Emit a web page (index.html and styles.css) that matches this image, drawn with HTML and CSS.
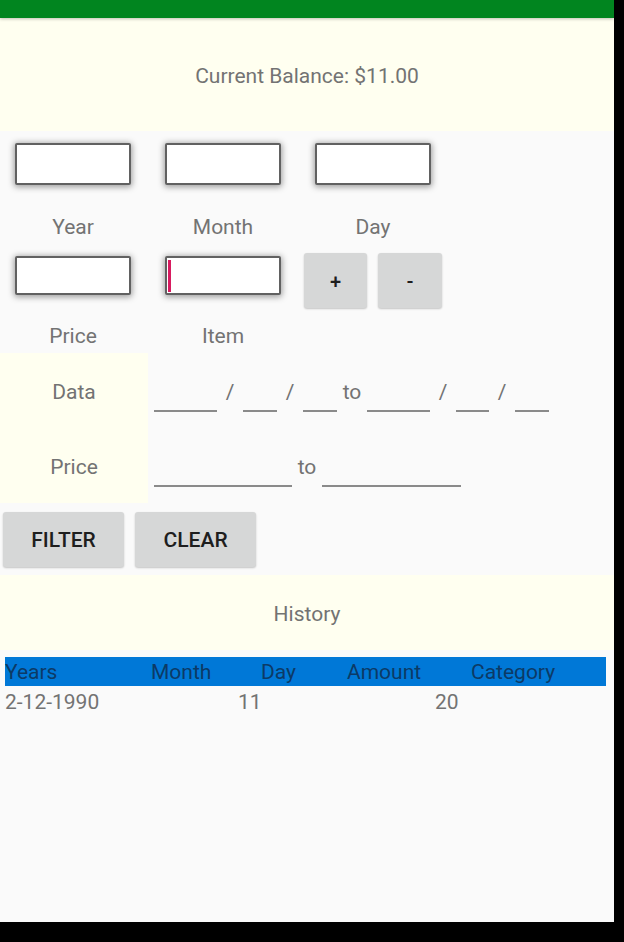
FILE: index.html
```html
<!DOCTYPE html>
<html>
<head>
<meta charset="utf-8">
<link rel="stylesheet" href="styles.css">
</head>
<body>
<div class="screen">
  <div class="appbar"></div>
  <div class="balance">Current Balance: $11.00</div>

  <div class="entry-row first">
    <div class="field"><div class="box tall"></div><div class="label">Year</div></div>
    <div class="field"><div class="box tall"></div><div class="label">Month</div></div>
    <div class="field"><div class="box tall"></div><div class="label">Day</div></div>
  </div>

  <div class="entry-row second">
    <div class="field"><div class="box"></div><div class="label">Price</div></div>
    <div class="field"><div class="box"><div class="cursor"></div></div><div class="label">Item</div></div>
    <div class="btn small plus">+</div>
    <div class="btn small minus">-</div>
  </div>

  <div class="filter">
    <div class="f-label">Data</div>
    <div class="f-inputs">
      <span class="line w63"></span><span class="sep">/</span>
      <span class="line w34"></span><span class="sep">/</span>
      <span class="line w34"></span><span class="sep to">to</span>
      <span class="line w63"></span><span class="sep">/</span>
      <span class="line w33"></span><span class="sep">/</span>
      <span class="line w34"></span>
    </div>
    <div class="f-label">Price</div>
    <div class="f-inputs">
      <span class="line w138"></span><span class="sep to">to</span>
      <span class="line w139"></span>
    </div>
  </div>

  <div class="actions">
    <div class="btn big">FILTER</div>
    <div class="btn big">CLEAR</div>
  </div>

  <div class="history">History</div>

  <div class="thead">
    <span>Years</span><span>Month</span><span>Day</span><span>Amount</span><span>Category</span>
  </div>
  <div class="trow">
    <span>2-12-1990</span><span>11</span><span>20</span>
  </div>
</div>
</body>
</html>
```
FILE: styles.css
```css
html, body {
  margin: 0;
  padding: 0;
  background: #000;
}
body {
  width: 624px;
  height: 942px;
  overflow: hidden;
  font-family: Roboto, "Liberation Sans", sans-serif;
  font-size: 21px;
  color: #737373;
}
.screen {
  width: 614px;
  height: 922px;
  background: #fafafa;
  display: flex;
  flex-direction: column;
  overflow: hidden;
}
.appbar {
  height: 18px;
  background: #01851f;
  box-shadow: 0 1px 3px rgba(0,0,0,0.25);
  position: relative;
  z-index: 1;
  flex: none;
}
.balance {
  height: 113px;
  background: #fffff0;
  display: flex;
  align-items: center;
  justify-content: center;
  padding-top: 2px;
  box-sizing: border-box;
  flex: none;
}
.entry-row {
  display: flex;
  align-items: flex-start;
  gap: 4px;
}
.entry-row.first { padding-top: 12px; }
.entry-row.second { margin-top: 14px; }
.field {
  width: 146px;
  display: flex;
  flex-direction: column;
  align-items: center;
}
.box {
  width: 116px;
  height: 39px;
  box-sizing: border-box;
  background: #fff;
  border: 2px solid #616161;
  border-radius: 2px;
  box-shadow: 0 1px 6px 1px rgba(0,0,0,0.38);
  display: flex;
  align-items: center;
  padding-left: 1px;
}
.second .box { margin-top: 3px; }
.box.tall { height: 42px; }
.cursor {
  width: 3px;
  height: 32px;
  background: #d81b60;
}
.label {
  line-height: 25px;
  height: 25px;
  padding-top: 1px;
  box-sizing: border-box;
}
.first .label { margin-top: 29px; }
.second .label { margin-top: 27px; padding-top: 2px; }
.btn {
  background: #d6d7d7;
  border-radius: 3px;
  box-shadow: 0 1px 2px rgba(0,0,0,0.22);
  color: #1e1e1e;
  font-family: "Roboto Medium", Roboto, "Liberation Sans", sans-serif;
  font-weight: 500;
  display: flex;
  align-items: center;
  justify-content: center;
  box-sizing: border-box;
  padding-top: 1px;
}
.btn.small {
  height: 55px;
  font-size: 20px;
}
.btn.plus { width: 63px; margin-left: 4px; }
.btn.minus { width: 64px; margin-left: 7px; }
.filter {
  margin-top: 6px;
  display: grid;
  grid-template-columns: 148px 1fr;
  grid-auto-rows: 75px;
}
.f-label {
  background: #fffff0;
  display: flex;
  align-items: center;
  justify-content: center;
  padding-top: 3px;
}
.f-inputs {
  display: flex;
  align-items: center;
  padding-left: 6px;
  padding-top: 3px;
}
.line {
  height: 40px;
  box-sizing: border-box;
  border-bottom: 2px solid #8a8a8a;
}
.w63 { width: 63px; }
.w34 { width: 34px; }
.w33 { width: 33px; }
.w138 { width: 138px; }
.w139 { width: 139px; }
.sep {
  width: 26px;
  text-align: center;
  line-height: 25px;
}
.sep.to { width: 30px; }
.actions {
  margin-top: 9px;
  padding-left: 3px;
  display: flex;
  gap: 11px;
}
.btn.big {
  width: 121px;
  height: 55px;
}
.history {
  margin-top: 8px;
  height: 75px;
  background: #fffff0;
  display: flex;
  align-items: center;
  justify-content: center;
  padding-top: 3px;
  box-sizing: border-box;
}
.thead {
  margin: 7px 8px 0 5px;
  height: 29px;
  line-height: 27px;
  padding-top: 2px;
  box-sizing: border-box;
  background: #0078d7;
  color: #0c3a66;
  display: grid;
  grid-template-columns: 146px 110px 86px 124px 1fr;
}
.trow {
  margin-left: 5px;
  line-height: 29px;
  padding-top: 2px;
  display: grid;
  grid-template-columns: 233px 197px 1fr;
}
```
